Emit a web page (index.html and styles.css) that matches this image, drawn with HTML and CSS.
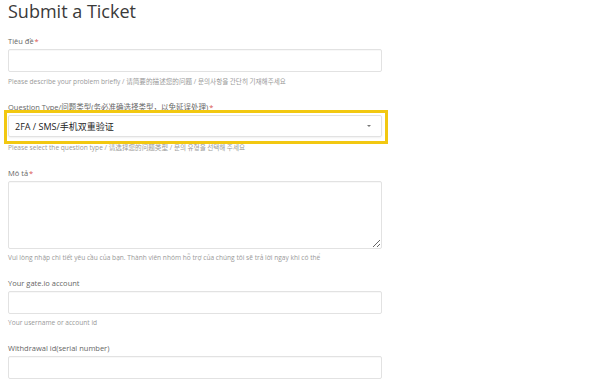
FILE: index.html
```html
<!DOCTYPE html>
<html lang="vi">
<head>
    <meta charset="UTF-8">
    <meta name="viewport" content="width=device-width, initial-scale=1.0">
    <title>Submit a Ticket</title>
    <link rel="stylesheet" href="styles.css">
</head>
<body>
    <div class="container">
        <h1 class="page-title">Submit a Ticket</h1>

        <form class="ticket-form">
            <div class="form-group">
                <label for="subject">Tiêu đề<span class="required">*</span></label>
                <input type="text" id="subject" class="form-control">
                <p class="help">Please describe your problem briefly / 请简要的描述您的问题 / <span class="ko">문의사항을 간단히 기재해주세요</span></p>
            </div>

            <div class="form-group">
                <label for="type">Question Type/问题类型(务必准确选择类型，以免延误处理)<span class="required">*</span></label>
                <div class="highlight">
                    <div class="select-box" id="type">
                        <span>2FA / SMS/手机双重验证</span>
                        <span class="caret"></span>
                    </div>
                </div>
                <p class="help help-select">Please select the question type / 请选择您的问题类型 / <span class="ko">문의 유형을 선택해 주세요</span></p>
            </div>

            <div class="form-group">
                <label for="description">Mô tả<span class="required">*</span></label>
                <textarea id="description" class="form-control"></textarea>
                <p class="help">Vui lòng nhập chi tiết yêu cầu của bạn. Thành viên nhóm hỗ trợ của chúng tôi sẽ trả lời ngay khi có thể</p>
            </div>

            <div class="form-group">
                <label for="account">Your gate.io account</label>
                <input type="text" id="account" class="form-control">
                <p class="help">Your username or account id</p>
            </div>

            <div class="form-group">
                <label for="withdrawal">Withdrawal id(serial number)</label>
                <input type="text" id="withdrawal" class="form-control">
            </div>
        </form>
    </div>
</body>
</html>
```

FILE: styles.css
```css
:root {
    --text-dark: #3a3a3a;
    --text-label: #666666;
    --text-help: #999999;
    --border: #e2e2e2;
    --required: #d9534f;
    --highlight: #f2c811;
}

* {
    margin: 0;
    padding: 0;
    box-sizing: border-box;
    font-family: 'Open Sans', 'Noto Sans CJK SC', sans-serif;
}

body {
    background-color: white;
    color: var(--text-dark);
}

.container {
    width: 382px;
    padding-left: 8px;
}

.page-title {
    font-size: 18px;
    font-weight: 400;
    line-height: 22px;
    height: 35px;
    color: var(--text-dark);
}

.form-group {
    margin-bottom: 13px;
}

label {
    display: block;
    font-size: 7.5px;
    line-height: 12px;
    margin-bottom: 2px;
    color: var(--text-label);
}

.required {
    color: var(--required);
    margin-left: 1px;
}

.form-control {
    display: block;
    width: 100%;
    height: 23px;
    border: 1px solid var(--border);
    border-radius: 2px;
    background-color: white;
    box-shadow: inset 0 1px 1px rgba(0, 0, 0, 0.03);
}

textarea.form-control {
    height: 68px;
    resize: vertical;
}

.highlight {
    position: relative;
}

.highlight::after {
    content: '';
    position: absolute;
    top: -5px;
    left: -4px;
    right: -6px;
    bottom: -7px;
    border: 3px solid var(--highlight);
    pointer-events: none;
}

.select-box {
    display: flex;
    align-items: center;
    justify-content: space-between;
    height: 22px;
    padding: 0 10px 0 6px;
    border: 1px solid var(--border);
    border-radius: 2px;
    font-size: 9px;
    color: #222;
    box-shadow: 0 1px 2px rgba(0, 0, 0, 0.06);
}

.caret {
    width: 0;
    height: 0;
    border-left: 2px solid transparent;
    border-right: 2px solid transparent;
    border-top: 2px solid #777;
}

.help {
    font-size: 6.6px;
    line-height: 12px;
    margin-top: 3px;
    color: var(--text-help);
}

.help-select {
    margin-top: 4px;
}

.ko {
    font-family: 'Noto Sans CJK KR', sans-serif;
}
```
